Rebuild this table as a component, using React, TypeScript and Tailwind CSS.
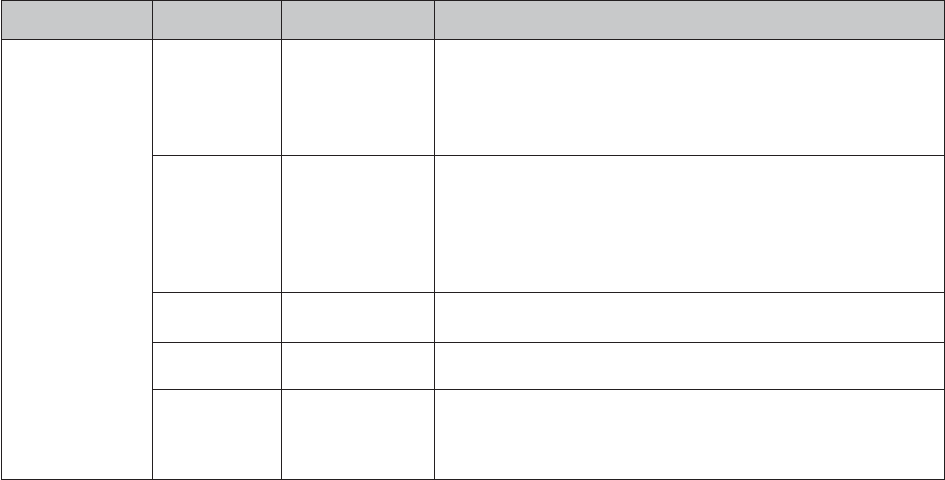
import React from "react";

export default function App() {
  const head = "bg-[#c8c9ca]";
  const cell = "bg-white";
  return (
    <div className="w-[945px] h-[480px] bg-white pl-px font-['Liberation_Sans',sans-serif]">
      <div className="grid w-[944px] h-[480px] bg-[#231f20] p-px gap-px grid-cols-[150px_128px_152px_509px] grid-rows-[38px_115px_136px_49px_46px_89px]">
        <div className={head} />
        <div className={head} />
        <div className={head} />
        <div className={head} />
        <div className={`${cell} row-span-5`} />
        <div className={cell} />
        <div className={cell} />
        <div className={cell} />
        <div className={cell} />
        <div className={cell} />
        <div className={cell} />
        <div className={cell} />
        <div className={cell} />
        <div className={cell} />
        <div className={cell} />
        <div className={cell} />
        <div className={cell} />
        <div className={cell} />
        <div className={cell} />
        <div className={cell} />
      </div>
    </div>
  );
}
